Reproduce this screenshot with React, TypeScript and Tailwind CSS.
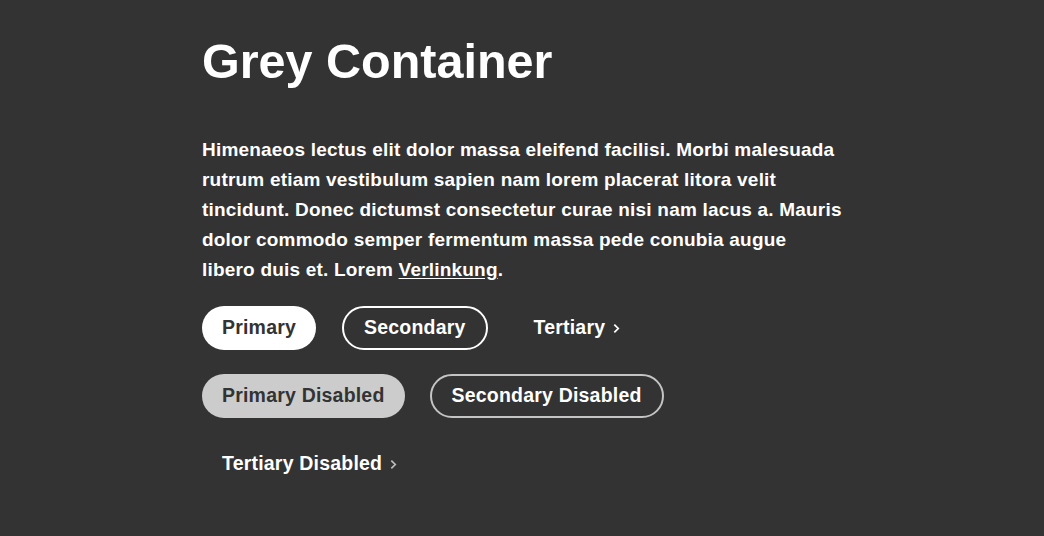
const FONT = "font-['Liberation_Sans',Arial,sans-serif]";

function Chevron({ className }: { className?: string }) {
  return (
    <svg viewBox="0 0 8 12" className={`h-[11px] w-[7px] ${className ?? ''}`} fill="none" stroke="currentColor" strokeWidth="2">
      <path d="M1.5 1.5 6 6l-4.5 4.5" />
    </svg>
  );
}

const base = 'inline-flex h-11 items-center justify-center rounded-full text-[19.5px] font-bold tracking-[0.2px] whitespace-nowrap';

export default function App() {
  return (
    <div className={`min-h-[536px] w-full bg-[#333333] ${FONT}`}>
      <div className="mx-auto w-[640px] pt-[33px]">
        <h1 className="mb-[46px] text-[48.5px] font-bold leading-[56px] text-white">Grey Container</h1>

        <p className="mb-[21px] text-[19px] font-bold leading-[30px] tracking-[0.2px] text-white">
          Himenaeos lectus elit dolor massa eleifend facilisi. Morbi malesuada rutrum etiam vestibulum sapien nam
          lorem placerat litora velit tincidunt. Donec dictumst consectetur curae nisi nam lacus a. Mauris dolor
          commodo semper fermentum massa pede conubia augue libero duis et. Lorem{' '}
          <a href="#" className="underline underline-offset-2">
            Verlinkung
          </a>
          .
        </p>

        <div className="flex flex-col gap-6">
          <div className="flex items-center gap-x-[26px]">
            <button className={`${base} bg-white px-5 text-[#333333]`}>Primary</button>
            <button className={`${base} border-2 border-white px-5 text-white`}>Secondary</button>
            <button className={`${base} gap-[8px] px-5 text-white`}>
              Tertiary <Chevron />
            </button>
          </div>
          <div className="flex flex-wrap items-center gap-x-[25px] gap-y-6">
            <button disabled className={`${base} bg-[#cccccc] px-5 text-[#333333]`}>
              Primary Disabled
            </button>
            <button disabled className={`${base} border-2 border-[#c4c4c4] px-5 text-white`}>
              Secondary Disabled
            </button>
            <button disabled className={`${base} gap-[8px] px-5 text-white`}>
              Tertiary Disabled <Chevron className="text-[#bbbbbb]" />
            </button>
          </div>
        </div>
      </div>
    </div>
  );
}
